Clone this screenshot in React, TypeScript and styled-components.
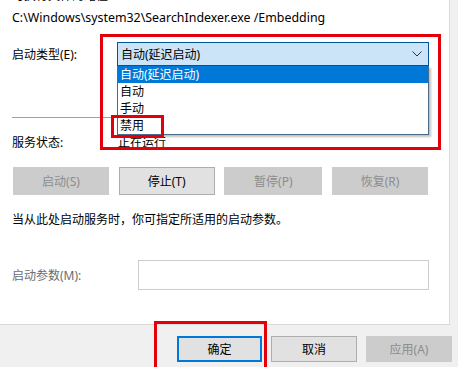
import React from 'react';
import styled, { createGlobalStyle } from 'styled-components';

const GlobalStyle = createGlobalStyle`
  body {
    margin: 0;
    background: #f0f0f0;
    font-family: "Noto Sans", "Noto Sans CJK SC", sans-serif;
    font-size: 12px;
    color: #000;
  }
`;

const Window = styled.div`
  position: relative;
  width: 458px;
  height: 367px;
  overflow: hidden;
  display: flex;
  flex-direction: column;
  background: #f0f0f0;
`;

const Page = styled.div`
  box-sizing: border-box;
  width: 450px;
  height: 325px;
  background: #fff;
  border-right: 1px solid #dadada;
  border-bottom: 1px solid #dadada;
  padding-left: 12px;
  display: flex;
  flex-direction: column;
`;

const Text = styled.div<{ $top?: number }>`
  line-height: 16px;
  height: 16px;
  white-space: nowrap;
  margin-top: ${({ $top }) => $top ?? 0}px;
`;

const PathText = styled.div`
  margin-top: 6px;
  height: 16px;
  line-height: 16px;
  white-space: nowrap;
  font-size: 12.4px;
`;

const Row = styled.div<{ $top: number }>`
  display: flex;
  align-items: center;
  margin-top: ${({ $top }) => $top}px;
`;

const Label = styled.div<{ $width: number; $muted?: boolean }>`
  width: ${({ $width }) => $width}px;
  flex-shrink: 0;
  white-space: nowrap;
  color: ${({ $muted }) => ($muted ? '#6d6d6d' : '#000')};
`;

const Combo = styled.div`
  position: relative;
  box-sizing: border-box;
  width: 312px;
  height: 24px;
  background: #cce4f7;
  border: 1px solid #005499;
  display: flex;
  align-items: center;
  justify-content: space-between;
  padding: 0 6px 0 3px;
`;

const DropList = styled.div`
  position: absolute;
  top: 23px;
  left: -1px;
  right: -1px;
  box-sizing: border-box;
  background: #fff;
  border: 1px solid #4a6a8a;
  border-top: none;
  box-shadow: 2px 2px 2px rgba(0, 0, 0, 0.25);
  z-index: 2;
`;

const Option = styled.div<{ $active?: boolean }>`
  height: 17px;
  line-height: 17px;
  padding-left: 2px;
  background: ${({ $active }) => ($active ? '#0078d7' : '#fff')};
  color: ${({ $active }) => ($active ? '#fff' : '#000')};
`;

const Separator = styled.div`
  width: 417px;
  height: 1px;
  background: #a0a0a0;
  margin-top: 51px;
`;

const ButtonRow = styled.div`
  display: flex;
  justify-content: space-between;
  width: 415px;
  margin-top: 16px;
  margin-left: 1px;
`;

const Button = styled.div<{ $width: number; $disabled?: boolean; $default?: boolean; $height?: number }>`
  box-sizing: border-box;
  width: ${({ $width }) => $width}px;
  height: ${({ $height }) => $height ?? 28}px;
  display: flex;
  align-items: center;
  justify-content: center;
  background: ${({ $disabled }) => ($disabled ? '#cccccc' : '#e1e1e1')};
  border: ${({ $disabled, $default }) =>
    $default ? '2px solid #0078d7' : $disabled ? '1px solid #cccccc' : '1px solid #adadad'};
  color: ${({ $disabled }) => ($disabled ? '#8d8d8d' : '#000')};
`;

const Input = styled.div`
  box-sizing: border-box;
  width: 291px;
  height: 30px;
  border: 1px solid #cccccc;
  background: #fff;
`;

const Footer = styled.div`
  display: flex;
  justify-content: flex-end;
  gap: 9px;
  padding: 11px 6px 0 0;
`;

const Mark = styled.div<{ $x: number; $y: number; $w: number; $h: number }>`
  position: absolute;
  left: ${({ $x }) => $x}px;
  top: ${({ $y }) => $y}px;
  width: ${({ $w }) => $w}px;
  height: ${({ $h }) => $h}px;
  box-sizing: border-box;
  border: 3px solid #e3000b;
  z-index: 5;
  pointer-events: none;
`;

const Chevron = () => (
  <svg width="10" height="6" viewBox="0 0 10 6">
    <path d="M0.5 0.5 L5 5 L9.5 0.5" fill="none" stroke="#333" strokeWidth="1" />
  </svg>
);

export default function App() {
  return (
    <>
      <GlobalStyle />
      <Window>
        <Page>
          <Text $top={-12}>可执行文件的路径:</Text>
          <PathText>C:\Windows\system32\SearchIndexer.exe /Embedding</PathText>
          <Row $top={16}>
            <Label $width={105}>启动类型(E):</Label>
            <Combo>
              <span>自动(延迟启动)</span>
              <Chevron />
              <DropList>
                <Option $active>自动(延迟启动)</Option>
                <Option>自动</Option>
                <Option>手动</Option>
                <Option>禁用</Option>
              </DropList>
            </Combo>
          </Row>
          <Separator />
          <Row $top={15}>
            <Label $width={106}>服务状态:</Label>
            <span>正在运行</span>
          </Row>
          <ButtonRow>
            <Button $width={96} $disabled>启动(S)</Button>
            <Button $width={96}>停止(T)</Button>
            <Button $width={98} $disabled>暂停(P)</Button>
            <Button $width={96} $disabled>恢复(R)</Button>
          </ButtonRow>
          <Text $top={17}>当从此处启动服务时，你可指定所适用的启动参数。</Text>
          <Row $top={32}>
            <Label $width={126} $muted>启动参数(M):</Label>
            <Input />
          </Row>
        </Page>
        <Footer>
          <Button $width={85} $height={26} $default>确定</Button>
          <Button $width={86} $height={26}>取消</Button>
          <Button $width={86} $height={26} $disabled>应用(A)</Button>
        </Footer>
        <Mark $x={100} $y={34} $w={341} $h={116} />
        <Mark $x={111} $y={115} $w={53} $h={23} />
        <Mark $x={154} $y={321} $w={113} $h={50} />
      </Window>
    </>
  );
}
